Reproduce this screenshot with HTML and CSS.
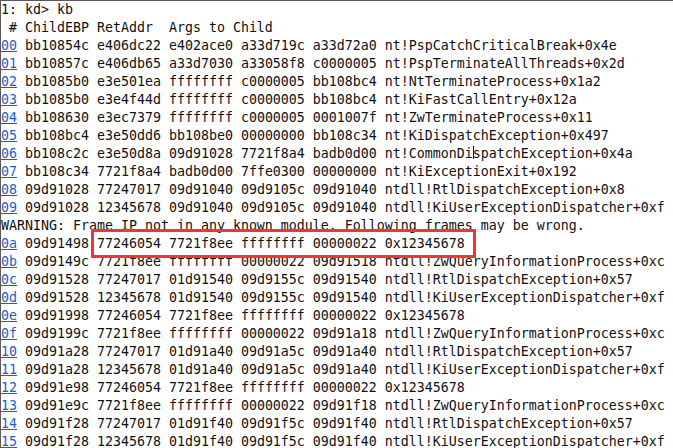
FILE: index.html
```html
<!DOCTYPE html>
<html lang="en">

<head>
  <meta charset="UTF-8">
  <title>kd&gt; kb</title>
  <link rel="stylesheet" href="styles.css">
</head>

<body>
  <div class="console">
    <div class="line">1: kd&gt; kb</div>
    <div class="line"> # ChildEBP RetAddr  Args to Child</div>
    <div class="line"><a class="frame">00</a> bb10854c e406dc22 e402ace0 a33d719c a33d72a0 nt!PspCatchCriticalBreak+0x4e</div>
    <div class="line"><a class="frame">01</a> bb10857c e406db65 a33d7030 a33058f8 c0000005 nt!PspTerminateAllThreads+0x2d</div>
    <div class="line"><a class="frame">02</a> bb1085b0 e3e501ea ffffffff c0000005 bb108bc4 nt!NtTerminateProcess+0x1a2</div>
    <div class="line"><a class="frame">03</a> bb1085b0 e3e4f44d ffffffff c0000005 bb108bc4 nt!KiFastCallEntry+0x12a</div>
    <div class="line"><a class="frame">04</a> bb108630 e3ec7379 ffffffff c0000005 0001007f nt!ZwTerminateProcess+0x11</div>
    <div class="line"><a class="frame">05</a> bb108bc4 e3e50dd6 bb108be0 00000000 bb108c34 nt!KiDispatchException+0x497</div>
    <div class="line"><a class="frame">06</a> bb108c2c e3e50d8a 09d91028 7721f8a4 badb0d00 nt!CommonDi<span class="caret"></span>spatchException+0x4a</div>
    <div class="line"><a class="frame">07</a> bb108c34 7721f8a4 badb0d00 7ffe0300 00000000 nt!KiExceptionExit+0x192</div>
    <div class="line"><a class="frame">08</a> 09d91028 77247017 09d91040 09d9105c 09d91040 ntdll!RtlDispatchException+0x8</div>
    <div class="line"><a class="frame">09</a> 09d91028 12345678 09d91040 09d9105c 09d91040 ntdll!KiUserExceptionDispatcher+0xf</div>
    <div class="line">WARNING: Frame IP not in any known module. Following frames may be wrong.</div>
    <div class="line"><a class="frame">0a</a> 09d91498 <span class="mark">77246054 7721f8ee ffffffff 00000022 0x12345678</span></div>
    <div class="line"><a class="frame">0b</a> 09d9149c 7721f8ee ffffffff 00000022 09d91518 ntdll!ZwQueryInformationProcess+0xc</div>
    <div class="line"><a class="frame">0c</a> 09d91528 77247017 01d91540 09d9155c 09d91540 ntdll!RtlDispatchException+0x57</div>
    <div class="line"><a class="frame">0d</a> 09d91528 12345678 01d91540 09d9155c 09d91540 ntdll!KiUserExceptionDispatcher+0xf</div>
    <div class="line"><a class="frame">0e</a> 09d91998 77246054 7721f8ee ffffffff 00000022 0x12345678</div>
    <div class="line"><a class="frame">0f</a> 09d9199c 7721f8ee ffffffff 00000022 09d91a18 ntdll!ZwQueryInformationProcess+0xc</div>
    <div class="line"><a class="frame">10</a> 09d91a28 77247017 01d91a40 09d91a5c 09d91a40 ntdll!RtlDispatchException+0x57</div>
    <div class="line"><a class="frame">11</a> 09d91a28 12345678 01d91a40 09d91a5c 09d91a40 ntdll!KiUserExceptionDispatcher+0xf</div>
    <div class="line"><a class="frame">12</a> 09d91e98 77246054 7721f8ee ffffffff 00000022 0x12345678</div>
    <div class="line"><a class="frame">13</a> 09d91e9c 7721f8ee ffffffff 00000022 09d91f18 ntdll!ZwQueryInformationProcess+0xc</div>
    <div class="line"><a class="frame">14</a> 09d91f28 77247017 01d91f40 09d91f5c 09d91f40 ntdll!RtlDispatchException+0x57</div>
    <div class="line"><a class="frame">15</a> 09d91f28 12345678 01d91f40 09d91f5c 09d91f40 ntdll!KiUserExceptionDispatcher+0xf</div>
  </div>
</body>

</html>
```

FILE: styles.css
```css
html,
body {
  margin: 0;
  padding: 0;
  background-color: #fff;
  overflow: hidden;
}

/* debugger output window */
.console {
  height: 448px;
  box-sizing: border-box;
  border-top: 1px solid #5a5a5a;
  border-left: 1px solid #5a5a5a;
  font-family: "DejaVu Sans Mono", "Liberation Mono", monospace;
  font-size: 13.29px;
  color: #111;
}

.line {
  height: 18px;
  line-height: 17.5px;
  white-space: pre;
}

.frame {
  color: #1c5fc4;
  text-decoration: underline;
}

/* red highlight box */
.mark {
  position: relative;
  display: inline-block;
}

.mark::after {
  content: "";
  position: absolute;
  top: -6px;
  bottom: -5px;
  left: -6px;
  right: -11px;
  border: 3px solid #e8383d;
}

/* mouse I-beam */
.caret {
  position: relative;
}

.caret::after {
  content: "";
  position: absolute;
  left: 0;
  top: 0;
  width: 1px;
  height: 13px;
  background-color: #111;
}
```
